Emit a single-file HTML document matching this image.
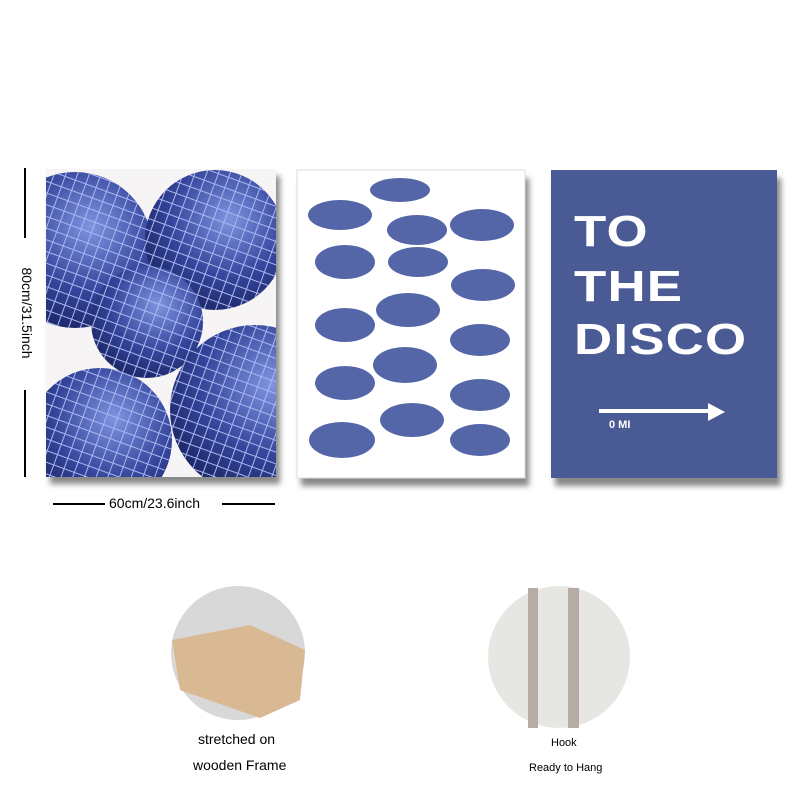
<!DOCTYPE html>
<html><head><style>
body{margin:0;width:800px;height:800px;background:#fff;overflow:hidden;position:relative;font-family:"Liberation Sans",sans-serif}
.a{position:absolute}
.d{position:absolute;color:#fff;font:900 44px/1 'Liberation Sans',sans-serif;transform:scaleX(1.2);transform-origin:left top;letter-spacing:1px}
</style></head><body>
<svg class="a" style="left:0;top:0" width="800" height="800" viewBox="0 0 800 800">
<defs>
<pattern id="grid" width="11" height="11" patternUnits="userSpaceOnUse" patternTransform="rotate(20)">
<rect width="11" height="11" fill="none"/><path d="M0 0H11M0 0V11" stroke="#a9b8f0" stroke-width="2"/></pattern>
<radialGradient id="ball" cx="0.6" cy="0.35" r="0.7"><stop offset="0" stop-color="#7f93e0"/><stop offset="0.6" stop-color="#34449a"/><stop offset="1" stop-color="#1c2664"/></radialGradient>
<clipPath id="p1"><rect x="46" y="169" width="230" height="308"/></clipPath>
<filter id="sh" x="-10%" y="-10%" width="130%" height="130%"><feGaussianBlur stdDeviation="3"/></filter>
</defs>
<rect x="50" y="176" width="230" height="308" fill="#888" filter="url(#sh)"/>
<rect x="301" y="178" width="228" height="308" fill="#888" filter="url(#sh)"/>
<rect x="555" y="178" width="226" height="308" fill="#888" filter="url(#sh)"/>
<rect x="46" y="169" width="230" height="308" fill="#f7f4f6"/>
<g clip-path="url(#p1)">
<circle cx="75" cy="250" r="78" fill="url(#ball)"/><circle cx="75" cy="250" r="78" fill="url(#grid)"/>
<circle cx="215" cy="240" r="70" fill="url(#ball)"/><circle cx="215" cy="240" r="70" fill="url(#grid)"/>
<circle cx="147" cy="322" r="56" fill="url(#ball)"/><circle cx="147" cy="322" r="56" fill="url(#grid)"/>
<circle cx="100" cy="440" r="72" fill="url(#ball)"/><circle cx="100" cy="440" r="72" fill="url(#grid)"/>
<circle cx="255" cy="410" r="85" fill="url(#ball)"/><circle cx="255" cy="410" r="85" fill="url(#grid)"/>
</g>
<rect x="297" y="170" width="228" height="308" fill="#fff" stroke="#ddd"/>
<g fill="#5466a8">
<ellipse cx="400" cy="190" rx="30" ry="12"/>
<ellipse cx="340" cy="215" rx="32" ry="15"/><ellipse cx="417" cy="230" rx="30" ry="15"/><ellipse cx="482" cy="225" rx="32" ry="16"/>
<ellipse cx="345" cy="262" rx="30" ry="17"/><ellipse cx="418" cy="262" rx="30" ry="15"/><ellipse cx="483" cy="285" rx="32" ry="16"/>
<ellipse cx="345" cy="325" rx="30" ry="17"/><ellipse cx="408" cy="310" rx="32" ry="17"/><ellipse cx="480" cy="340" rx="30" ry="16"/>
<ellipse cx="345" cy="383" rx="30" ry="17"/><ellipse cx="405" cy="365" rx="32" ry="18"/><ellipse cx="480" cy="395" rx="30" ry="16"/>
<ellipse cx="342" cy="440" rx="33" ry="18"/><ellipse cx="412" cy="420" rx="32" ry="17"/><ellipse cx="480" cy="440" rx="30" ry="16"/>
</g>
<rect x="551" y="170" width="226" height="308" fill="#4a5a94"/>
<path d="M599 411H715" stroke="#fff" stroke-width="4"/><path d="M708 403L725 412L708 421Z" fill="#fff"/>
<path d="M25 168V238M25 390V477" stroke="#000" stroke-width="2"/>
<path d="M53 504H105M222 504H275" stroke="#000" stroke-width="2"/>
<circle cx="238" cy="653" r="67" fill="#d8d8d8"/>
<path d="M172 640L250 625L305 650L300 700L260 718L180 690Z" fill="#d9b994"/>
<circle cx="559" cy="657" r="71" fill="#e6e6e3"/>
<rect x="528" y="588" width="10" height="140" fill="#b5aca6"/><rect x="568" y="588" width="11" height="140" fill="#b5aca6"/>
</svg>
<div class="d" style="left:574px;top:210px">TO</div>
<div class="d" style="left:574px;top:265px">THE</div>
<div class="d" style="left:574px;top:318px">DISCO</div>
<div class="a" style="left:609px;top:419px;color:#fff;font:bold 11px 'Liberation Sans'">0 MI</div>
<div class="a" style="left:-23px;top:305px;transform:rotate(90deg);font-size:14px;width:100px;text-align:center">80cm/31.5inch</div>
<div class="a" style="left:109px;top:495px;font-size:14px">60cm/23.6inch</div>
<div class="a" style="left:198px;top:731px;font-size:14px">stretched on</div>
<div class="a" style="left:193px;top:757px;font-size:14px">wooden Frame</div>
<div class="a" style="left:551px;top:737px;font-size:11px">Hook</div>
<div class="a" style="left:529px;top:762px;font-size:11px">Ready to Hang</div>
</body></html>
